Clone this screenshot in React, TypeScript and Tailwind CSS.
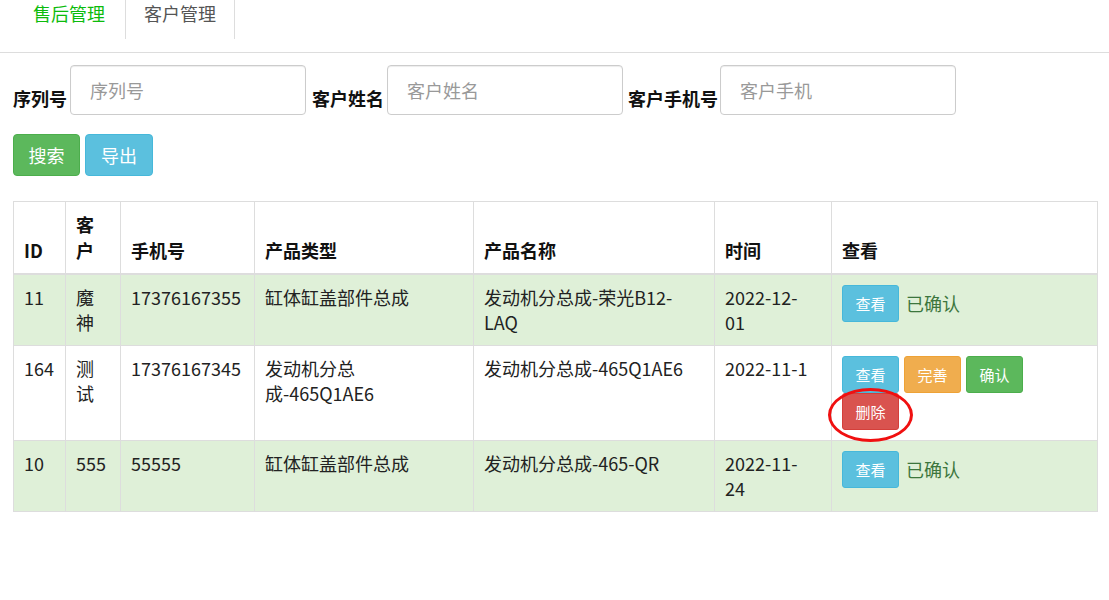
import React from 'react';

const font = { fontFamily: '"Noto Sans CJK SC", "Noto Sans", sans-serif' };

type Row = {
  id: string;
  name: React.ReactNode;
  phone: string;
  type: React.ReactNode;
  product: React.ReactNode;
  time: React.ReactNode;
  confirmed: boolean;
};

const rows: Row[] = [
  {
    id: '11',
    name: '魔神',
    phone: '17376167355',
    type: '缸体缸盖部件总成',
    product: (
      <>
        发动机分总成-荣光B12-
        <br />
        LAQ
      </>
    ),
    time: (
      <>
        2022-12-
        <br />
        01
      </>
    ),
    confirmed: true,
  },
  {
    id: '164',
    name: '测试',
    phone: '17376167345',
    type: (
      <>
        发动机分总
        <br />
        成-465Q1AE6
      </>
    ),
    product: '发动机分总成-465Q1AE6',
    time: '2022-11-1',
    confirmed: false,
  },
  {
    id: '10',
    name: '555',
    phone: '55555',
    type: '缸体缸盖部件总成',
    product: '发动机分总成-465-QR',
    time: (
      <>
        2022-11-
        <br />
        24
      </>
    ),
    confirmed: true,
  },
];

const btn =
  'w-[57px] h-[37px] rounded-[3px] border text-white text-[15px] leading-none flex items-center justify-center';

function SmallButton({ label, color }: { label: string; color: string }) {
  return <button className={`${btn} ${color}`}>{label}</button>;
}

export default function App() {
  const td = 'border border-[#ddd] px-[10px] py-[10px] align-top leading-[25px]';
  const th = 'border border-[#ddd] border-b-2 px-[10px] py-[10px] align-bottom text-left font-bold leading-[25.7px]';

  return (
    <div className="min-h-[600px] w-[1109px] bg-white text-[18px] text-[#333]" style={font}>
      {/* tabs */}
      <div className="h-[53px] border-b border-[#ddd]">
        <ul className="flex pl-[13px]">
          <li className="w-[113px] h-[39px] border-r border-[#ddd] text-center leading-[27px] text-[#0cbb0c]">
            售后管理
          </li>
          <li className="w-[109px] h-[39px] border-r border-[#ddd] text-center leading-[27px] text-[#555]">
            客户管理
          </li>
        </ul>
      </div>

      {/* search form */}
      <div className="mt-[12px] flex items-end pl-[13px]">
        <label className="w-[57px] mb-[3px] font-bold leading-[27px] text-[#111]">序列号</label>
        <input
          className="w-[236px] h-[50px] rounded-[4px] border border-[#ccc] px-[19px] text-[18px] placeholder:text-[#999] shadow-[inset_0_1px_1px_rgba(0,0,0,0.075)] outline-none"
          placeholder="序列号"
        />
        <label className="ml-[6px] w-[75px] mb-[3px] font-bold leading-[27px] text-[#111]">客户姓名</label>
        <input
          className="w-[236px] h-[50px] rounded-[4px] border border-[#ccc] px-[19px] text-[18px] placeholder:text-[#999] shadow-[inset_0_1px_1px_rgba(0,0,0,0.075)] outline-none"
          placeholder="客户姓名"
        />
        <label className="ml-[5px] w-[92px] mb-[3px] font-bold leading-[27px] text-[#111]">客户手机号</label>
        <input
          className="w-[236px] h-[50px] rounded-[4px] border border-[#ccc] px-[19px] text-[18px] placeholder:text-[#999] shadow-[inset_0_1px_1px_rgba(0,0,0,0.075)] outline-none"
          placeholder="客户手机"
        />
      </div>

      <div className="mt-[19px] flex gap-[5px] pl-[13px]">
        <button className="w-[67px] h-[42px] rounded-[4px] border border-[#4cae4c] bg-[#5cb85c] text-white text-[18px]">
          搜索
        </button>
        <button className="w-[68px] h-[42px] rounded-[4px] border border-[#46b8da] bg-[#5bc0de] text-white text-[18px]">
          导出
        </button>
      </div>

      {/* table */}
      <table className="mt-[25px] ml-[13px] w-[1084px] table-fixed border-collapse border border-[#ddd]">
        <colgroup>
          <col className="w-[52px]" />
          <col className="w-[55px]" />
          <col className="w-[134px]" />
          <col className="w-[219px]" />
          <col className="w-[241px]" />
          <col className="w-[117px]" />
          <col className="w-[266px]" />
        </colgroup>
        <thead>
          <tr className="text-[#111]">
            <th className={th}>ID</th>
            <th className={th}>客户</th>
            <th className={th}>手机号</th>
            <th className={th}>产品类型</th>
            <th className={th}>产品名称</th>
            <th className={th}>时间</th>
            <th className={th}>查看</th>
          </tr>
        </thead>
        <tbody className="text-[#222]">
          {rows.map((r) => (
            <tr key={r.id} className={r.confirmed ? 'bg-[#dff0d8]' : 'bg-white'}>
              <td className={td}>{r.id}</td>
              <td className={td}>{r.name}</td>
              <td className={td}>{r.phone}</td>
              <td className={td}>{r.type}</td>
              <td className={td}>{r.product}</td>
              <td className={td}>{r.time}</td>
              <td className={td}>
                {r.confirmed ? (
                  <div className="flex items-center gap-[7px]">
                    <SmallButton label="查看" color="bg-[#5bc0de] border-[#46b8da]" />
                    <span className="text-[#3c763d]">已确认</span>
                  </div>
                ) : (
                  <div className="flex flex-col">
                    <div className="flex gap-[5px]">
                      <SmallButton label="查看" color="bg-[#5bc0de] border-[#46b8da]" />
                      <SmallButton label="完善" color="bg-[#f0ad4e] border-[#eea236]" />
                      <SmallButton label="确认" color="bg-[#5cb85c] border-[#4cae4c]" />
                    </div>
                    <div className="relative w-[57px]">
                      <SmallButton label="删除" color="bg-[#d9534f] border-[#d43f3a]" />
                      {/* hand-drawn highlight */}
                      <div className="absolute left-[-14px] top-[-5px] w-[85px] h-[54px] rounded-[50%] border-[3px] border-[#f01010] pointer-events-none" />
                    </div>
                  </div>
                )}
              </td>
            </tr>
          ))}
        </tbody>
      </table>
    </div>
  );
}
